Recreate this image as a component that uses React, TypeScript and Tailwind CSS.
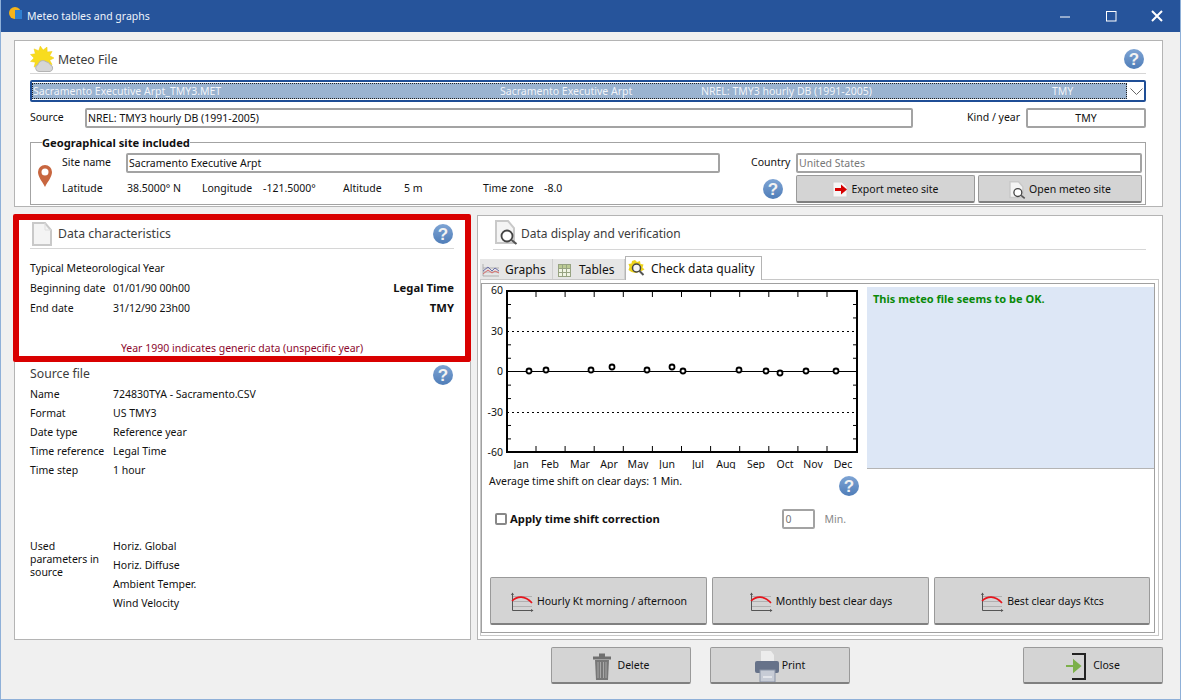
import React from 'react';

const font = { fontFamily: '"Noto Sans", sans-serif' };

const HelpIcon = ({ className = '' }: { className?: string }) => (
  <svg viewBox="0 0 20 20" className={`w-5 h-5 shrink-0 ${className}`}>
    <defs>
      <linearGradient id="helpGrad" x1="0" y1="0" x2="0" y2="1">
        <stop offset="0" stopColor="#7ea4d4" />
        <stop offset="1" stopColor="#4f7db8" />
      </linearGradient>
    </defs>
    <circle cx="10" cy="10" r="10" fill="url(#helpGrad)" />
    <text x="10" y="16" textAnchor="middle" fontSize="17" fontWeight="700" fill="#f2f2f2" fontFamily="Liberation Sans, sans-serif">?</text>
  </svg>
);

const DocIcon = () => (
  <svg viewBox="0 0 20 24" className="w-5 h-6 shrink-0">
    <path d="M1 1h12l6 7v15H1z" fill="#f4f4f4" stroke="#c9c9c9" strokeWidth="2" />
    <path d="M13 1v7h6" fill="none" stroke="#dedede" />
  </svg>
);

const DocSearchIcon = ({ small = false }: { small?: boolean }) => (
  <svg viewBox="0 0 23 25" className={small ? 'w-[17px] h-[18px] shrink-0' : 'w-[23px] h-[25px] shrink-0'}>
    <path d="M1 1h12l6 7v15H1z" fill="#f4f4f4" stroke="#c9c9c9" strokeWidth="2" />
    <circle cx="12" cy="16" r="5.500" fill="#fff" stroke="#444" strokeWidth="1.8" />
    <path d="M16.5 20l5 4" stroke="#555" strokeWidth="2.200" />
  </svg>
);

// 20 point star for the sun
const sunPoints = Array.from({ length: 22 }, (_, i) => {
  const r = i % 2 === 0 ? 12 : 8;
  const a = (i * Math.PI) / 11;
  return `${(12 + r * Math.cos(a)).toFixed(1)},${(12 + r * Math.sin(a)).toFixed(1)}`;
}).join(' ');

const SunCloud = () => (
  <svg viewBox="0 0 24 26" className="w-6 h-[26px] shrink-0">
    <polygon points={sunPoints} fill="#f8dc1e" stroke="#efcb12" strokeWidth=".5" />
    <path d="M9 25.500a3.500 3.500 0 0 1-1-6.800 5 5 0 0 1 8-3 4.500 4.500 0 0 1 4 3 3.500 3.500 0 0 1 0 6.800z" fill="#d6d6d6" stroke="#b4b4b4" />
  </svg>
);

const Pin = () => (
  <svg viewBox="0 0 14 22" className="w-[14px] h-[22px] shrink-0">
    <path d="M7 22C4 16 0 12 0 7a7 7 0 0 1 14 0c0 5-4 9-7 15z" fill="#c8663f" />
    <circle cx="7" cy="7" r="3.500" fill="#fff" />
  </svg>
);

const GraphIcon = () => (
  <svg viewBox="0 0 24 20" className="w-6 h-5 shrink-0">
    <path d="M2 4.500h20M2 9.500h20M2 14.500h20" stroke="#b0b0b0" />
    <path d="M2.500 1v17.500H23" fill="none" stroke="#555" />
    <path d="M1 3l1.500-2.500L4 3zM21 17l2.500 1.500L21 20z" fill="#555" />
    <path d="M2 9C7 4 15 3 22 11" fill="none" stroke="#e8141c" strokeWidth="1.600" />
  </svg>
);

const Trash = () => (
  <svg viewBox="0 0 18 27" className="w-[18px] h-[27px] shrink-0">
    <path d="M6 2h6M0 5h18" stroke="#6f6f6f" strokeWidth="3" />
    <path d="M2 7h14l-1 20H3z" fill="#777" />
    <path d="M5 9v16M7.500 9v16M10.500 9v16M13 9v16" stroke="#a8a8a8" />
  </svg>
);

const Printer = () => (
  <svg viewBox="0 0 24 31" className="w-6 h-[31px] shrink-0">
    <path d="M6 0h10l3 4v8H6z" fill="#ececec" />
    <rect x="0" y="10" width="24" height="12" rx="2" fill="#667289" />
    <rect x="5" y="19" width="15" height="12" fill="#c7ccd6" stroke="#8a93a6" />
    <path d="M8 26h9" stroke="#fff" />
  </svg>
);

const CloseIcon = () => (
  <svg viewBox="0 0 20 27" className="w-5 h-[27px] shrink-0">
    <path d="M6 1h13v25H6" fill="none" stroke="#222" strokeWidth="2" />
    <path d="M0 13h9M8 8l6 5-6 5z" fill="#7cb04a" stroke="#7cb04a" strokeWidth="2" />
  </svg>
);

const ExportIcon = () => (
  <svg viewBox="0 0 16 17" className="w-4 h-[17px] shrink-0">
    <path d="M1 1h9l5 5v10H1z" fill="#f6f6f6" stroke="#d0d0d0" />
    <path d="M3 7h6V3.500l6 5-6 5V10H3z" fill="#d60000" />
  </svg>
);

const GraphsTabIcon = () => (
  <svg viewBox="0 0 17 13" className="w-[17px] h-[13px] shrink-0">
    <path d="M1 0v12h16M1 4h16M1 8h16" fill="none" stroke="#999" strokeWidth=".7" />
    <path d="M1 7l5-4 4 4 3-3 4 3" fill="none" stroke="#6b6ea8" />
    <path d="M1 10l5-4 4 3 3-2 4 2" fill="none" stroke="#d86a6a" />
  </svg>
);

const TablesTabIcon = () => (
  <svg viewBox="0 0 13 13" className="w-[13px] h-[13px] shrink-0">
    <rect x=".5" y=".5" width="12" height="12" fill="#f0f4e4" stroke="#97a382" />
    <rect x="1" y="1" width="11" height="3" fill="#bccb94" />
    <path d="M4.500 1v11M8.500 1v11M1 4.500h11M1 8.500h11" stroke="#97a382" />
  </svg>
);

const QualityTabIcon = () => (
  <svg viewBox="0 0 17 17" className="w-[17px] h-[17px] shrink-0">
    <path d="M7 0l2 2 3-1 .500 3 3 .500-1 3 2 2-3 1.500-6 2-4-1-3-2 1-3-1-3 3-.500L4 1z" fill="#ecd21a" />
    <circle cx="8.500" cy="8" r="4" fill="#f4f4f4" stroke="#444" strokeWidth="1.500" />
    <path d="M11.500 11l4 4" stroke="#555" strokeWidth="2" />
  </svg>
);

const Input = ({ value, className = '', muted = false, center = false }: { value: string; className?: string; muted?: boolean; center?: boolean }) => (
  <div className={`h-5 border-2 border-[#a3a3a3] rounded-[2px] bg-white flex items-center px-[1px] pt-[1px] leading-none ${muted ? 'text-[#777]' : 'text-[#111]'} ${center ? 'justify-center' : ''} ${className}`}>
    {value}
  </div>
);

const Button = ({ children, className = '' }: { children: React.ReactNode; className?: string }) => (
  <div className={`flex items-center justify-center pt-[2px] bg-[#d4d4d4] border border-[#9a9a9a] border-b-2 border-b-[#808080] rounded-[2px] text-[#111] ${className}`}>
    {children}
  </div>
);

const months: [string, number][] = [
  ['Jan', 521], ['Feb', 550], ['Mar', 580], ['Apr', 609], ['May', 638], ['Jun', 667],
  ['Jul', 698], ['Aug', 726], ['Sep', 756], ['Oct', 785], ['Nov', 813], ['Dec', 843],
];
const points = [[529, 371], [546, 370], [591, 370], [612, 367], [647, 370], [672, 367], [683, 371], [739, 370], [766, 371], [780, 373], [806, 371], [836, 371]];

const Chart = () => {
  const xTicks = Array.from({ length: 11 }, (_, i) => 536 + i * 29.1);
  const yMinor = Array.from({ length: 11 }, (_, i) => 304.5 + i * 13.44).filter((_, i) => i % 3 !== 2);
  return (
    <svg viewBox="482 285 385 184" className="w-[385px] h-[184px] shrink-0 block">
      {xTicks.map((x) => (
        <path key={x} d={`M${x} 291v6M${x} 452v-6`} stroke="#000" />
      ))}
      {yMinor.map((y) => (
        <path key={y} d={`M507 ${y}h4M857 ${y}h-4`} stroke="#000" />
      ))}
      <path d="M507 331.500h350M507 412.500h350" stroke="#000" strokeDasharray="2 3" />
      <path d="M507 371.500h350" stroke="#000" />
      <rect x="507" y="291" width="350" height="161" fill="none" stroke="#000" strokeWidth="2" />
      {points.map(([x, y]) => (
        <circle key={x} cx={x} cy={y} r="2.500" fill="#fff" stroke="#000" strokeWidth="1.800" />
      ))}
      {[['60', 294], ['30', 335], ['0', 375], ['-30', 416], ['-60', 456]].map(([t, y]) => (
        <text key={t} x="503" y={y} textAnchor="end" fontSize="10.500" fill="#111" fontFamily="Noto Sans, sans-serif">{t}</text>
      ))}
      {months.map(([m, x]) => (
        <text key={m} x={x} y="468" textAnchor="middle" fontSize="10.500" fill="#111" fontFamily="Noto Sans, sans-serif">{m}</text>
      ))}
    </svg>
  );
};

const sourceRows = [
  ['Name', '724830TYA - Sacramento.CSV'],
  ['Format', 'US TMY3'],
  ['Date type', 'Reference year'],
  ['Time reference', 'Legal Time'],
  ['Time step', '1 hour'],
];

export default function App() {
  return (
    <div style={font} className="w-[1181px] h-[700px] bg-[#f0f0f0] text-[10.500px] text-[#111] border-x border-b border-x-[#8fb0d8] border-b-[#8fb0d8] overflow-hidden">
      {/* Title bar */}
      <div className="h-8 -mx-[1px] bg-[#26549b] flex items-center text-white">
        <svg viewBox="0 0 13 13" className="w-[13px] h-[13px] ml-[9px] mb-[5px]">
          <circle cx="6" cy="6" r="6" fill="#f4b41a" />
          <rect x="6" y="3" width="7" height="9" fill="#2f7fd0" />
        </svg>
        <span className="ml-[5px] pt-[2px] text-[10.500px] text-[#eef3fa]">Meteo tables and graphs</span>
        <div className="ml-auto flex items-center">
          <svg viewBox="0 0 11 11" className="w-[11px] h-[11px]"><path d="M0 6h10" stroke="#fff" /></svg>
          <svg viewBox="0 0 11 11" className="w-[11px] h-[11px] ml-[35px]"><rect x=".5" y=".5" width="9.500" height="9.500" fill="none" stroke="#fff" /></svg>
          <svg viewBox="0 0 12 12" className="w-3 h-3 ml-[34px] mr-[18px]"><path d="M1 1l10 10M11 1L1 11" stroke="#fff" strokeWidth="2" /></svg>
        </div>
      </div>

      <div className="px-3">
        {/* Meteo file panel */}
        <div className="mt-2 ml-[1px] w-[1149px] h-[167px] bg-white border border-[#b4b4b4] pl-[15px] pr-[16px]">
          <div className="h-[33px] pt-[3px] border-b border-[#d6d6d6] flex items-center">
            <SunCloud />
            <span className="ml-[4px] mt-[3px] text-[12.250px] text-[#3c3c3c]">Meteo File</span>
            <HelpIcon className="ml-auto mr-[2px]" />
          </div>
          <div className="mt-[6px] h-[22px] border-2 border-[#1f4e96] rounded-[2px] flex items-center">
            <div className="h-4 w-[1095px] pt-[1px] bg-[#9ab3d0] border border-dotted border-[#222] text-[#f2f5fa] grid grid-cols-[467px_201px_351px_1fr] items-center leading-none">
              <span>Sacramento Executive Arpt_TMY3.MET</span>
              <span>Sacramento Executive Arpt</span>
              <span>NREL: TMY3 hourly DB (1991-2005)</span>
              <span>TMY</span>
            </div>
            <svg viewBox="0 0 13 7" className="w-[13px] h-[7px] ml-[3px]"><path d="M.5.5l6 6 6-6" fill="none" stroke="#666" /></svg>
          </div>
          <div className="mt-[6px] flex items-center">
            <span className="w-[55px]">Source</span>
            <Input value="NREL: TMY3 hourly DB (1991-2005)" className="w-[828px]" />
            <span className="ml-[54px] w-[59px]">Kind / year</span>
            <Input value="TMY" center className="w-[120px]" />
          </div>
          <fieldset className="mt-[7px] h-[70px] border border-[#a3a3a3] border-t-[#a3a3a3]">
            <legend className="ml-[11px] font-bold text-[11.200px] leading-[14px] pt-[1px]">Geographical site included</legend>
            <div className="flex mt-[3px] pr-[3px]">
              <div className="w-[31px] pl-[7px] pt-[12px] shrink-0"><Pin /></div>
              <div className="flex-1 flex flex-col">
                <div className="flex items-center">
                  <span className="w-[64px]">Site name</span>
                  <Input value="Sacramento Executive Arpt" className="w-[594px]" />
                  <span className="ml-[31px] w-[45px]">Country</span>
                  <Input value="United States" muted className="flex-1" />
                </div>
                <div className="mt-[2px] flex items-center">
                  <span className="w-[65px]">Latitude</span>
                  <span className="w-[75px]">38.5000° N</span>
                  <span className="w-[61px]">Longitude</span>
                  <span className="w-[80px]">-121.5000°</span>
                  <span className="w-[61px]">Altitude</span>
                  <span className="w-[79px]">5 m</span>
                  <span className="w-[61px]">Time zone</span>
                  <span>-8.0</span>
                  <HelpIcon className="ml-auto mr-[13px]" />
                  <Button className="w-[179px] h-[28px] gap-[3px]"><ExportIcon />Export meteo site</Button>
                  <Button className="w-[164px] h-[28px] ml-[3px] gap-[3px]"><DocSearchIcon small />Open meteo site</Button>
                </div>
              </div>
            </div>
          </fieldset>
        </div>

        <div className="flex mt-[7px]">
          {/* Left column */}
          <div className="w-[458px] flex flex-col shrink-0">
            <div className="h-[148px] border-[6px] border-[#d90000] rounded-[2px] bg-white px-[11px]">
              <div className="h-[29px] border-b border-[#d6d6d6] flex items-center pl-[2px] pr-[1px]">
                <DocIcon />
                <span className="ml-[6px] text-[12.250px] text-[#3c3c3c]">Data characteristics</span>
                <HelpIcon className="ml-auto" />
              </div>
              <div className="mt-2 h-5 pt-[3px] flex items-center">Typical Meteorological Year</div>
              <div className="h-5 pt-[3px] flex items-center">
                <span className="w-[83px]">Beginning date</span>
                <span>01/01/90 00h00</span>
                <span className="ml-auto font-bold text-[11.250px]">Legal Time</span>
              </div>
              <div className="h-5 pt-[3px] flex items-center">
                <span className="w-[83px]">End date</span>
                <span>31/12/90 23h00</span>
                <span className="ml-auto font-bold text-[11.250px]">TMY</span>
              </div>
              <div className="mt-[22px] h-4 pt-[3px] flex items-center justify-center text-[#8c0a2e]">Year 1990 indicates generic data (unspecific year)</div>
            </div>
            <div className="ml-[1px] h-[278px] bg-white border border-t-0 border-[#b4b4b4] pl-[15px] pr-[17px]">
              <div className="h-[22px] flex items-center">
                <span className="pt-[2px] text-[12.250px] text-[#3c3c3c]">Source file</span>
                <HelpIcon className="ml-auto mt-[3px]" />
              </div>
              {sourceRows.map(([k, v]) => (
                <div key={k} className="h-[19px] pt-[2px] flex items-center">
                  <span className="w-[83px]">{k}</span>
                  <span>{v}</span>
                </div>
              ))}
              <div className="mt-[57px] flex">
                <div className="w-[83px] leading-[13px] pt-[4px]">Used<br />parameters in<br />source</div>
                <div>
                  {['Horiz. Global', 'Horiz. Diffuse', 'Ambient Temper.', 'Wind Velocity'].map((p) => (
                    <div key={p} className="h-[19px] pt-[2px] flex items-center">{p}</div>
                  ))}
                </div>
              </div>
            </div>
          </div>

          {/* Right column */}
          <div className="ml-[6px] mt-[1px] w-[686px] h-[425px] bg-white border border-[#b4b4b4]">
            <div className="mx-[15px] mr-[16px] h-[34px] border-b border-[#d6d6d6] flex items-center pl-[2px]">
              <DocSearchIcon />
              <span className="ml-[3px] mt-[2px] text-[12px] text-[#3c3c3c]">Data display and verification</span>
            </div>
            <div className="mt-[6px] pl-[2px] h-[23px] flex items-end">
              <div className="h-5 pt-[2px] w-[73px] bg-[#e6e6e6] border-r border-[#cfcfcf] flex items-center pl-[2px] gap-[6px] text-[12px]"><GraphsTabIcon />Graphs</div>
              <div className="h-5 pt-[2px] w-[72px] bg-[#e6e6e6] border-r border-[#cfcfcf] flex items-center pl-[5px] gap-[8px] text-[12px]"><TablesTabIcon />Tables</div>
              <div className="h-[24px] -mb-[1px] w-[137px] bg-white border border-b-0 border-[#b4b4b4] flex items-center pl-[2px] gap-[6px] text-[12px] relative"><QualityTabIcon />Check data quality</div>
            </div>
            <div className="ml-[2px] w-[679px] h-[357px] border border-[#c8c8c8] pt-[3px] pr-[3px] pb-[2px]">
              <div className="h-[350px] border border-[#a0a0a0]">
                <div className="flex h-[185px] pt-[1px]">
                  <Chart />
                  <div className="flex-1 mt-[2px] bg-[#dde7f6] border-b border-[#b4b4b4] pl-[6px] pt-[4px] text-[#0a8a0a] font-bold text-[11px]">This meteo file seems to be OK.</div>
                </div>
                <div className="w-[385px] mt-[4px] pl-[7px] flex items-start h-[23px]">
                  <span className="leading-4">Average time shift on clear days:  1 Min.</span>
                  <HelpIcon className="ml-auto mr-[8px] mt-[3px]" />
                </div>
                <div className="w-[385px] mt-[13px] pl-[13px] h-5 flex items-center">
                  <div className="w-3 h-3 border-2 border-[#888] rounded-[2px] bg-white shrink-0" />
                  <span className="ml-[3px] font-bold text-[11.250px]">Apply time shift correction</span>
                  <Input value="0" muted className="ml-auto w-[33px]" />
                  <span className="ml-[9px] mr-[21px] pt-[1px] text-[#888]">Min.</span>
                </div>
                <div className="mt-[48px] pl-2 flex gap-[5px]">
                  <Button className="w-[217px] h-12 gap-[3px]"><GraphIcon />Hourly Kt morning / afternoon</Button>
                  <Button className="w-[217px] h-12 gap-[3px]"><GraphIcon />Monthly best clear days</Button>
                  <Button className="w-[216px] h-12 gap-[3px]"><GraphIcon />Best clear days Ktcs</Button>
                </div>
              </div>
            </div>
          </div>
        </div>

        {/* Bottom buttons */}
        <div className="mt-[7px] pl-[538px] flex">
          <Button className="w-[140px] h-[37px] gap-[7px]"><Trash />Delete</Button>
          <Button className="w-[140px] h-[37px] ml-[19px] gap-[3px]"><Printer />Print</Button>
          <Button className="w-[140px] h-[37px] ml-[173px] gap-[7px]"><CloseIcon />Close</Button>
        </div>
      </div>
    </div>
  );
}
